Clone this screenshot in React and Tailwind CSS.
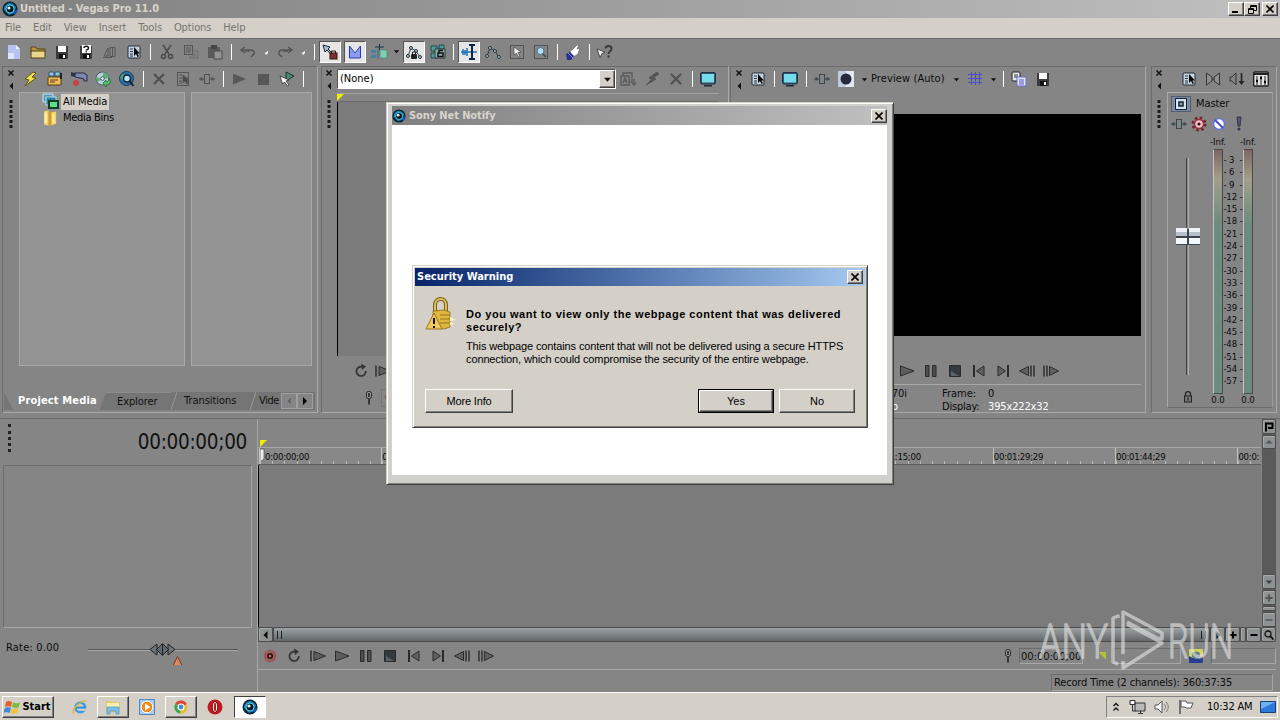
import clsx from 'clsx'

const UI = "font-['DejaVu_Sans_Condensed','DejaVu_Sans',sans-serif]"

const floppy = (
  <>
    <path d="M2 2h12v13H2z" fill="#3c3c3c" />
    <path d="M4 2h8v6H4z" fill="#fff" />
    <path d="M5 10h7v5H5z" fill="#111" />
    <path d="M9 11h2v3H9z" fill="#fff" />
  </>
)
const props = (
  <>
    <rect x="2" y="2" width="12" height="12" rx="1" fill="#c3d3df" stroke="#222c36" />
    <path d="M4 5h3M4 7.500h3M4 10h3M4 12h3" stroke="#26384c" />
    <path d="M8 3v9l2-2 1.500 3 1.500-.7-1.500-2.800H14z" fill="#080808" />
  </>
)
const monitor = (
  <>
    <rect x=".5" y="1.500" width="15" height="11.500" rx="1.500" fill="#36536b" stroke="#203347" />
    <path d="M2 3h12v8.500H2z" fill="#76dcec" />
    <path d="M4 14h8v1.500H4z" fill="#1d2b38" />
  </>
)
const insertFx = (
  <>
    <path d="M0 8h5M11 8h5" stroke="currentColor" />
    <rect x="5.500" y="3.500" width="5" height="9" fill="none" stroke="currentColor" />
    <path d="M2.500 6.500v3M13.500 6.500v3" stroke="currentColor" strokeWidth="2" />
  </>
)
const cross = <path d="M3 3l10 10M13 3L3 13" stroke="currentColor" strokeWidth="2.200" />
const envelope = (
  <>
    <path d="M2 12L5 4l5 3 4 6" fill="none" stroke="#2b3b43" />
    <g fill="#a9c5cc" stroke="#26343b">
      <circle cx="2" cy="12" r="1.500" />
      <circle cx="5" cy="4" r="1.500" />
      <circle cx="10" cy="7" r="1.500" />
      <circle cx="14" cy="13" r="1.500" />
    </g>
  </>
)

const ICONS = {
  app: (
    <>
      <circle cx="8" cy="8" r="7.500" fill="#08212f" />
      <path d="M2 9a6 6 0 0 1 9-6l3 3-2 6-5 2z" fill="#1587b5" />
      <circle cx="8" cy="8" r="4" fill="#06131d" stroke="#5cc9e8" />
      <circle cx="7" cy="7" r="1.600" fill="#d4f4ff" />
      <path d="M12 13l3-4" stroke="#1c58c8" strokeWidth="2" />
    </>
  ),
  file: (
    <>
      <path d="M2 1h8l4 4v10H2z" fill="#b7c2f0" />
      <path d="M10 1v4h4z" fill="#eef1ff" />
      <path d="M2 9h6v6H2z" fill="#dfe4ff" />
    </>
  ),
  open: (
    <>
      <path d="M1 3h5l1 2h8v3H1z" fill="#b89a3c" stroke="#544314" />
      <path d="M1 7h14v7H1z" fill="#ecd58c" stroke="#544314" />
    </>
  ),
  floppy,
  floppyAs: (
    <>
      {floppy}
      <path d="M4 1h9v8H4z" fill="#fff" />
      <path d="M6 4c0-2.500 4.500-2.500 4.500 0S8.200 5 8.200 6.500" fill="none" stroke="#111" strokeWidth="1.500" />
      <path d="M7.500 7.300H9v1.200H7.500z" fill="#111" />
    </>
  ),
  render: (
    <g fill="none" stroke="#555">
      <path d="M2 12l4-8v8zM8 3.500h5v9H8zM10.500 4v8M1 13.500h9" />
    </g>
  ),
  props,
  cut: (
    <g fill="none" stroke="#494949" strokeWidth="1.500">
      <path d="M4 1l6 9M12 1L6 10" />
      <circle cx="4.500" cy="12.500" r="2" />
      <circle cx="11.500" cy="12.500" r="2" />
    </g>
  ),
  copy: (
    <g fill="none" stroke="#555">
      <rect x="1.500" y="1.500" width="8" height="9" />
      <path d="M3 4h5M3 6h5M3 8h5" />
      <path d="M7 12v2h8V7h-4M9 10h4M9 12h4" stroke="#6b6b6b" />
    </g>
  ),
  paste: (
    <>
      <path d="M1 3h12v11H1z" fill="#5a5a5a" />
      <path d="M4 1h6v4H4z" fill="#454545" />
      <path d="M7 7h8v8H7z" fill="#949494" stroke="#4b4b4b" />
    </>
  ),
  undo: (
    <g fill="none" stroke="#545454" strokeWidth="1.500">
      <path d="M5 3L1 6l4 3M1 6h9c3 0 5 1 4 4l-3 3" />
      <path d="M5 7h5" />
    </g>
  ),
  redo: (
    <g fill="none" stroke="#545454" strokeWidth="1.500">
      <path d="M11 3l4 3-4 3M15 6H6c-3 0-5 1-4 4l3 3" />
      <path d="M11 7H6" />
    </g>
  ),
  editTool: (
    <>
      <path d="M1 1l7 2-2 2 4 4-1.500 1L5 6 3 8z" fill="#a9c0d8" stroke="#1b2433" />
      <rect x="8" y="9" width="7" height="6" fill="#7c2f2f" stroke="#30120f" />
      <path d="M9.500 9V7h4v2" fill="none" stroke="#30120f" />
    </>
  ),
  fade: <path d="M2.500 2l5.500 7 5.500-7v12h-11z" fill="#8b9cf4" stroke="#2b3ba8" />,
  ripple: (
    <>
      <path d="M4 3h9M8.500 0v6" stroke="#1d3442" />
      <path d="M9 6h7v8H9z" fill="#7fd0ae" stroke="#3f8067" strokeWidth=".6" />
      <path d="M0 6h5v3H0zM0 11h5v3H0z" fill="#4482a8" />
      <path d="M7 5v10" stroke="#2d6f9a" />
    </>
  ),
  envLock: (
    <>
      {envelope}
      <rect x="5" y="10" width="6" height="5" rx="1" fill="#222" />
      <path d="M6.500 10V8h3v2" fill="none" stroke="#222" />
    </>
  ),
  group: (
    <>
      <path d="M1 2h6v5H1zM1 9h6v5H1zM9 1h5v4H9z" fill="#4f9c9d" stroke="#27484a" />
      <path d="M5 5h10v9H5z" fill="#8fb0ac" stroke="#2a3c3c" />
      <path d="M8 9h5v3.500H8zM9 9V6.500h4" fill="none" stroke="#111" strokeWidth="1.500" />
    </>
  ),
  normal: (
    <>
      <path d="M0 8h16M2 5v6M4 6v5M6 4v8" stroke="#2270b8" strokeWidth="1.500" />
      <path d="M8 1h6M11 1v14M8 15h6" stroke="#0e2440" strokeWidth="2" />
    </>
  ),
  envelope,
  select: (
    <>
      <rect x="1.500" y="1.500" width="13" height="13" fill="none" stroke="#222" strokeDasharray="1 1" />
      <path d="M5 3l7 5-3 .5 2 4-1.500.7-2-4L5 11z" fill="#eee" stroke="#333" strokeWidth=".6" />
    </>
  ),
  zoomTool: (
    <>
      <rect x="1.500" y="1.500" width="13" height="13" fill="none" stroke="#222" strokeDasharray="1 1" />
      <circle cx="7.500" cy="7" r="3.500" fill="#b8dcf4" stroke="#47708f" />
      <path d="M10 10l3 3" stroke="#38566c" strokeWidth="2" />
    </>
  ),
  hand: (
    <>
      <path d="M5 7l2-1 5-5 2 0-2 4 3-1-1 3-1 3-3 2-3 1z" fill="#fff" stroke="#555" strokeWidth=".6" />
      <path d="M1 10l4-2 4 4-3 4H2z" fill="#2b2f8d" />
      <path d="M3 9l5 5" stroke="#7c87e5" />
    </>
  ),
  help: (
    <>
      <path d="M0 5l8 3-3 1.500-2 4z" fill="#ececec" stroke="#333" strokeWidth=".8" />
      <path d="M8.500 4.500c0-3.500 6-3.500 6 0S11.500 7 11.500 10" fill="none" stroke="#3a3a3a" strokeWidth="2" />
      <path d="M10.500 11.500h2v2h-2z" fill="#333" />
    </>
  ),
  bolt: <path d="M10 1L2 8l4 1-4 6 11-8-4-1 4-4z" fill="#f0e04c" stroke="#5b5313" />,
  mediaFx: (
    <>
      <path d="M2 1h5v4H2zM8 1h5v4H8z" fill="#8ec6e8" stroke="#385468" />
      <path d="M1 6h13v8H1z" fill="#e9c05a" stroke="#5b3d12" />
      <path d="M3 9h8M3 11h5" stroke="#7a2a1c" />
      <path d="M14 2v6" stroke="#222" strokeWidth="2" />
    </>
  ),
  capture: (
    <>
      <path d="M0 1l4 1v4L0 5z" fill="#2c3446" />
      <path d="M4 2h9l3 2v6h-3V8L4 6z" fill="#7d86ac" stroke="#222a40" />
      <circle cx="5" cy="12" r="3" fill="#c9424a" />
    </>
  ),
  disc: (
    <>
      <circle cx="7.500" cy="7.500" r="6.500" fill="#b9d0df" stroke="#4a6170" />
      <path d="M8 1a7 7 0 0 1 6 6l-6 1zM8 8l-6 3-1-5z" fill="#5fae74" />
      <circle cx="7.500" cy="7.500" r="1.800" fill="#e8f3fa" stroke="#456" />
      <path d="M8 12l3-3v2c2 0 3-2 3-4 3 5 0 7-3 7v2z" fill="#4fc462" stroke="#19612a" strokeWidth=".7" />
    </>
  ),
  webGet: (
    <>
      <circle cx="7.500" cy="7.500" r="7" fill="#2f6fa6" stroke="#153b5c" />
      <path d="M3 3l3 1 1 4-3 2-3-3z" fill="#47a36b" />
      <circle cx="8" cy="7.500" r="3.500" fill="#b8e3f6" stroke="#10202e" strokeWidth="1.500" />
      <path d="M10.500 10l4 5" stroke="#10202e" strokeWidth="2" />
    </>
  ),
  cross,
  propsDim: (
    <g fill="none" stroke="#555">
      <rect x="2.500" y="1.500" width="11" height="13" />
      <path d="M4 4h3M4 7h3M4 10h3M4 12h3" />
      <path d="M8 4v8l2-2 2 3 1-1-1-3h2z" fill="#4a4a4a" />
    </g>
  ),
  insertFx,
  playDim: <path d="M2 2.500L15 8 2 13.500z" fill="#575757" />,
  stopDim: <path d="M3 3h11v11H3z" fill="#575757" />,
  autoPreview: (
    <>
      <path d="M7 1l8 4-8 5z" fill="#4b8a79" stroke="#12352d" />
      <path d="M1 5l9 4-3 1 3 4-1.500 1-3-4-2 2z" fill="#f3f3f3" stroke="#222" strokeWidth=".7" />
    </>
  ),
  allMedia: (
    <>
      <path d="M0 0h10v8H0z" fill="#5b9fc0" stroke="#bfe6f2" />
      <path d="M3 3h10v8H3z" fill="#347e9c" stroke="#a9dced" />
      <path d="M5 6h11v9H5z" fill="#123f27" />
      <path d="M7 8h7v5H7z" fill="#5ddf8c" />
    </>
  ),
  bins: (
    <>
      <path d="M1 1l5-1v16l-5-1zM8 2l6-1v13l-6 2z" fill="#f5d56a" />
      <path d="M6 1h3v15H6z" fill="#cf9c2b" />
      <path d="M2 2h2v11H2zM10 4h2v9h-2z" fill="#fff0b0" />
    </>
  ),
  fxDim: (
    <g fill="none" stroke="#5a5a5a" strokeWidth="1.300">
      <path d="M1 5h8v9H1zM3 5V2h9v9h-3M3 12l2-5 2 5M4 10h2" />
      <path d="M14 8v6M12 12l2 2 2-2" />
    </g>
  ),
  boltDim: <path d="M13 1L5 7l3 1-6 6 10-6-3-1 6-4z" fill="#555" stroke="#555" />,
  monitor,
  split: (
    <>
      <path d="M0 0h16v16H0z" fill="#e3e7ef" />
      <path d="M0 0h8v16H0z" fill="#c0cbe4" />
      <circle cx="8" cy="8" r="5.500" fill="#27293c" />
    </>
  ),
  grid: <path d="M4.500 1v13M8.500 1v13M12.500 1v13M1 3.500h14M1 7.500h14M1 11.500h14" stroke="#4c51bd" />,
  copyPic: (
    <>
      <rect x="1" y="1" width="8" height="9" rx="1" fill="#e3e9ec" stroke="#222" />
      <path d="M3 4h4M3 6h4" stroke="#333" />
      <path d="M6 6h9v9H6z" fill="#dfe2ff" stroke="#6a6fd0" />
      <path d="M8 9h5M8 11h5M8 13h5" stroke="#5559c0" />
    </>
  ),
  downmix: <path d="M1.500 2L7 6v4l-5.500 4zM14.500 2L9 6v4l5.500 4zM7 8h2" fill="#8f8f8f" stroke="#333" />,
  dim: (
    <>
      <path d="M1 6h2l4-4v12L3 10H1z" fill="#858585" stroke="#333" />
      <path d="M12.500 2v10" stroke="#222" strokeWidth="1.600" />
      <path d="M9.500 10h6l-3 4z" fill="#222" />
    </>
  ),
  mixer: (
    <>
      <rect x=".7" y="1" width="14.600" height="14" rx="1" fill="#e4e4e4" stroke="#222" strokeWidth="1.400" />
      <path d="M1 3h14" stroke="#222" strokeWidth="2" />
      <path d="M4 5v9M8 5v9M12 5v9" stroke="#222" />
      <path d="M3 10h2M7 7h2M11 11h2" stroke="#000" strokeWidth="2.500" />
    </>
  ),
  gear: (
    <>
      <circle cx="8" cy="8" r="6" fill="none" stroke="#6e2430" strokeWidth="3" strokeDasharray="2.400 2.300" />
      <circle cx="8" cy="8" r="4.500" fill="#f0c4cb" stroke="#9d2e40" strokeWidth="1.500" />
      <circle cx="8" cy="8" r="1.600" fill="#3c0d14" />
    </>
  ),
  mute: (
    <>
      <circle cx="8" cy="8" r="5.500" fill="#fff" stroke="#6b6fe6" strokeWidth="1.500" />
      <path d="M4 4l8 8" stroke="#4a4fc8" strokeWidth="2" />
    </>
  ),
  solo: (
    <>
      <path d="M6 1h4L9 10H7z" fill="#55577a" stroke="#26283c" strokeWidth=".8" />
      <circle cx="8" cy="13" r="1.600" fill="#34364e" />
    </>
  ),
  padlock: (
    <>
      <path d="M5.500 7V5c0-3.300 5-3.300 5 0v2" fill="none" stroke="#222" strokeWidth="1.300" />
      <rect x="4.500" y="7" width="7" height="6" fill="#777" stroke="#222" />
      <path d="M8 8.500v3" stroke="#111" />
    </>
  ),
  record: (
    <>
      <circle cx="8" cy="8" r="5.500" fill="#946868" stroke="#a35252" strokeWidth="1.600" />
      <circle cx="8" cy="8" r="2.200" fill="#a58080" stroke="#3d0b0b" strokeWidth="1.700" />
    </>
  ),
  loop: (
    <>
      <path d="M9 3.700A4.700 4.700 0 1 0 12.800 8" fill="none" stroke="#333" strokeWidth="1.700" />
      <path d="M8 .5l5 3-4 3.500z" fill="#333" />
    </>
  ),
  playStart: (
    <>
      <path d="M1 2.500v11" stroke="#333" strokeWidth="1.600" />
      <path d="M4 3.500L15.500 8 4 12.500z" fill="#5e5e5e" stroke="#2b2b2b" />
    </>
  ),
  play: <path d="M1.500 3L15 8 1.500 13z" fill="#5e5e5e" stroke="#2b2b2b" />,
  pause: <path d="M2.500 2.500h3.500v11H2.500zM9.500 2.500H13v11H9.500z" fill="#4e4e4e" stroke="#2b2b2b" />,
  stop: (
    <>
      <path d="M2.500 2.500h11v11h-11z" fill="#34393d" stroke="#2b2b2b" />
      <path d="M4 8l8 5H4z" fill="#59636a" />
    </>
  ),
  toStart: (
    <>
      <path d="M3 2v12" stroke="#2b2b2b" strokeWidth="2" />
      <path d="M13 3v10L5.500 8z" fill="#606060" stroke="#2b2b2b" />
    </>
  ),
  toEnd: (
    <>
      <path d="M13 2v12" stroke="#2b2b2b" strokeWidth="2" />
      <path d="M3 3v10L10.500 8z" fill="#606060" stroke="#2b2b2b" />
    </>
  ),
  prevFrame: (
    <>
      <path d="M9.500 3.500v9L.5 8z" fill="#606060" stroke="#2b2b2b" />
      <path d="M12 2.500v11M15 2.500v11" stroke="#2b2b2b" strokeWidth="1.400" />
    </>
  ),
  nextFrame: (
    <>
      <path d="M6.500 3.500v9l9-4.500z" fill="#606060" stroke="#2b2b2b" />
      <path d="M1 2.500v11M4 2.500v11" stroke="#2b2b2b" strokeWidth="1.400" />
    </>
  ),
  pin: (
    <>
      <rect x="5.500" y="1.500" width="5" height="7" rx="2" fill="#9a9a9a" stroke="#222" />
      <path d="M8 3v4M8 9v5.500" stroke="#222" strokeWidth="1.600" />
    </>
  ),
  ie: (
    <>
      <circle cx="8.300" cy="8.500" r="4.800" fill="none" stroke="#3c9be4" strokeWidth="2.600" />
      <path d="M4 8.600h9" stroke="#2f8fd9" strokeWidth="2" />
      <path d="M10 11l5-.5" stroke="#d4d0c8" strokeWidth="2" />
      <path d="M1.500 14.500C-1 11 9 1 14.500 2" fill="none" stroke="#e8b526" strokeWidth="1.400" />
    </>
  ),
  explorer: (
    <>
      <path d="M1 2h5l1 1h8v10H1z" fill="#e6c964" />
      <path d="M2 4h12v5H2z" fill="#fbf0b4" />
      <path d="M2 8h12v7h-3v-3H5v3H2z" fill="#7cbfe6" stroke="#4c93c4" strokeWidth=".7" />
    </>
  ),
  wmp: (
    <>
      <path d="M.5.500h15v15H.5z" fill="#a9cdf0" stroke="#4a86c0" />
      <circle cx="8" cy="8" r="5.800" fill="#f08a1d" stroke="#fff" />
      <path d="M6 4.500L11.500 8 6 11.500z" fill="#fff" />
    </>
  ),
  chrome: (
    <>
      <circle cx="8" cy="8" r="7.500" fill="#e8bd2c" />
      <path d="M8 8L1.500 4.200A7.500 7.500 0 0 1 14.600 4.500z" fill="#d9453b" />
      <path d="M8 8L1.500 4.200A7.500 7.500 0 0 0 7 15.500z" fill="#3ea455" />
      <circle cx="8" cy="8" r="3.400" fill="#4a86dd" stroke="#fff" strokeWidth="1.300" />
    </>
  ),
  opera: (
    <>
      <circle cx="8" cy="8" r="7.500" fill="#c01a1f" />
      <ellipse cx="8" cy="8" rx="2.800" ry="5.500" fill="#f6e9e6" stroke="#7c0a0d" />
      <ellipse cx="8" cy="8" rx="1" ry="4.500" fill="#b51216" />
    </>
  ),
  network: (
    <>
      <path d="M5 4h10v8H5z" fill="#b9b9b9" stroke="#333" />
      <path d="M8 14.500h5M10.500 12v3M0 1.500h5v4H0zM2.500 5v7h3" fill="none" stroke="#333" />
      <path d="M1 2h3v3H1z" fill="#fff" />
    </>
  ),
  speaker: (
    <>
      <path d="M1 6h3l4-4v12l-4-4H1z" fill="#f6f6f6" stroke="#555" />
      <path d="M10 5c2 2 2 4 0 6M12 3c3 3 3 7 0 10" fill="none" stroke="#777" />
    </>
  ),
  flag: (
    <>
      <path d="M2 1v14" stroke="#555" strokeWidth="1.500" />
      <path d="M3 2h5l1 2h6l-2 5H8L7 8H3z" fill="#fff" stroke="#555" />
    </>
  ),
  desktop: (
    <>
      <path d="M.5 2.500h15v11H.5z" fill="#2f79d8" stroke="#1c3d78" />
      <path d="M1 3h14L1 10z" fill="#6fb0f4" />
    </>
  ),
  windows: (
    <>
      <path d="M1 3c2-1.500 4-1 6 0L6 8C4 7 2 7 0 8z" fill="#e4602c" />
      <path d="M8 3.500c2 1 4 1 7 0l-1.500 5c-2.500 1-4.500.5-6.500-.5z" fill="#7fba3c" />
      <path d="M0 9c2-1 4-1 6 0l-1.500 5C3 13-.500 13-1.500 14z" fill="#3d86d8" />
      <path d="M7 9.500c2 1 4 1 6.500 0L12 14c-2 1-4 1-6.500 0z" fill="#f4c22c" />
    </>
  ),
}

function Icon({ name, className = 'size-4' }) {
  return (
    <svg viewBox="0 0 16 16" className={clsx('shrink-0 overflow-visible', className)}>
      {ICONS[name]}
    </svg>
  )
}

function Slot({ name, on, dim, className = 'w-6' }) {
  return (
    <div className={clsx('flex h-6 shrink-0 items-center justify-center', className, dim ? 'text-[#505050]' : 'text-[#39464e]')}>
      {on ? (
        <div className="flex size-[22px] items-center justify-center border border-t-[#555] border-l-[#555] border-r-white border-b-white bg-[#e6e6e6]">
          <Icon name={name} />
        </div>
      ) : (
        <Icon name={name} />
      )}
    </div>
  )
}

function Sep({ className = 'w-2' }) {
  return (
    <div className={clsx('flex shrink-0 justify-center', className)}>
      <div className="h-4 w-px bg-white" />
    </div>
  )
}

function Caret({ className = 'w-[13px]', size = 'size-[7px]' }) {
  return (
    <div className={clsx('flex shrink-0 justify-center', className)}>
      <svg viewBox="0 0 8 8" className={size}>
        <path d="M1 2.500h6L4 6z" fill="#111" />
      </svg>
    </div>
  )
}

// little undo/redo history arrows
function Fleck() {
  return (
    <div className="flex w-[13px] shrink-0 justify-center pt-[3px]">
      <svg viewBox="0 0 4 4" className="size-1">
        <path d="M0 2L3 0v2L1 4z" fill="#fff" />
      </svg>
    </div>
  )
}

function Grip({ dots = true }) {
  return (
    <div className="flex w-2 shrink-0 flex-col items-center">
      <svg viewBox="0 0 8 60" className="h-[60px] w-2">
        <path d="M1.500 1.500l5 5M6.500 1.500l-5 5" stroke="#111" strokeWidth="1.500" />
        <path d="M6 13.500v7L2.500 17z" fill="#111" />
        {dots && <path d="M4 31v28" stroke="#1c1c1c" strokeWidth="3" strokeDasharray="3 2" />}
      </svg>
    </div>
  )
}

function WinButton({ children, className }) {
  return (
    <div
      className={clsx(
        'flex shrink-0 items-center justify-center border border-t-white border-l-white border-r-[#404040] border-b-[#404040] bg-[#d4d0c8] text-black shadow-[inset_-1px_-1px_0_#808080]',
        className
      )}
    >
      {children}
    </div>
  )
}

function CloseGlyph() {
  return (
    <svg viewBox="0 0 8 8" className="size-2">
      <path d="M.5.500l7 7M7.500.500l-7 7" stroke="#000" strokeWidth="1.600" />
    </svg>
  )
}

function TitleBar() {
  return (
    <div className="flex h-[18px] shrink-0 items-center bg-linear-to-r from-[#808080] to-[#c0c0c0] pr-[2px] pl-[2px]">
      <Icon name="app" />
      <span className="ml-[2px] flex-1 pt-px text-[11px] font-bold tracking-[-0.030px] text-[#d8d4cc]">Untitled - Vegas Pro 11.0</span>
      <WinButton className="h-[14px] w-4">
        <svg viewBox="0 0 8 8" className="size-2"><path d="M0 7h6" stroke="#000" strokeWidth="2" /></svg>
      </WinButton>
      <WinButton className="h-[14px] w-4">
        <svg viewBox="0 0 9 9" className="size-[9px]">
          <path d="M2.500 3V.500h6v5H6M2 1.500h7M.5 3.500h5v5h-5zM0 4.500h6" fill="none" stroke="#000" />
        </svg>
      </WinButton>
      <WinButton className="ml-[2px] h-[14px] w-4"><CloseGlyph /></WinButton>
    </div>
  )
}

function MenuBar() {
  return (
    <div className="flex h-5 shrink-0 items-center gap-[12px] bg-[#d4d0c8] pt-px pl-[5px] text-[11px] tracking-[-0.120px] text-[#77746e]">
      {['File', 'Edit', 'View', 'Insert', 'Tools', 'Options', 'Help'].map((m) => (
        <span key={m}>{m}</span>
      ))}
    </div>
  )
}

function MainToolbar() {
  return (
    <div className="flex h-[28px] shrink-0 items-center border-t border-[#6c6c6c] pb-[2px] pl-[2px]">
      <Slot name="file" />
      <Slot name="open" />
      <Slot name="floppy" />
      <Slot name="floppyAs" />
      <Slot name="render" />
      <Slot name="props" />
      <Sep className="w-[9px]" />
      <Slot name="cut" />
      <Slot name="copy" />
      <Slot name="paste" />
      <Sep className="w-[9px]" />
      <Slot name="undo" />
      <Fleck />
      <Slot name="redo" />
      <Fleck />
      <Sep />
      <Slot name="editTool" on />
      <Slot name="fade" on className="w-[25px]" />
      <Slot name="ripple" className="w-[23px]" />
      <Caret className="w-[12px]" />
      <Slot name="envLock" on />
      <Slot name="group" className="w-[23px]" />
      <Sep />
      <Slot name="normal" on />
      <Slot name="envelope" />
      <Slot name="select" />
      <Slot name="zoomTool" />
      <Sep />
      <Slot name="hand" />
      <Sep />
      <Slot name="help" />
    </div>
  )
}

const PANEL = 'flex shrink-0 border border-t-[#6c6c6c] border-l-[#6c6c6c] border-r-[#a8a8a8] border-b-[#a8a8a8] pt-[2px]'
const SUNKEN = 'border border-t-[#6c6c6c] border-l-[#6c6c6c] border-r-[#a8a8a8] border-b-[#a8a8a8]'

function MediaPanel() {
  return (
    <div className={clsx(PANEL, 'w-[316px] pl-1')}>
      <Grip />
      <div className="flex w-[300px] flex-col">
        <div className="mb-[3px] flex h-[20px] items-center pl-1">
          <Slot name="bolt" />
          <Slot name="mediaFx" />
          <Slot name="capture" />
          <Slot name="disc" />
          <Slot name="webGet" />
          <Sep />
          <Slot name="cross" dim />
          <Slot name="propsDim" />
          <Slot name="insertFx" dim />
          <Sep />
          <Slot name="playDim" />
          <Slot name="stopDim" />
          <Slot name="autoPreview" />
          <Sep />
        </div>
        <div className="flex gap-[6px] pl-1">
          <div className="h-[274px] w-[166px] border border-[#a9a9a9] bg-[#939393] pt-px pl-[23px] text-[11px] leading-4 text-black">
            <div className="flex items-center">
              <Icon name="allMedia" />
              <span className="ml-[2px] bg-[#d4d0c8] px-[2px] tracking-[-0.100px]">All Media</span>
            </div>
            <div className="flex items-center">
              <Icon name="bins" className="h-4 w-[15px]" />
              <span className="ml-[5px] tracking-[-0.300px]">Media Bins</span>
            </div>
          </div>
          <div className="h-[274px] w-[121px] border border-[#a9a9a9] bg-[#939393]" />
        </div>
        <div className="-ml-[11px] mt-[26px] flex h-[18px] items-center bg-[#757575] text-[11px] text-[#101010]">
          <div className="flex h-full w-[102px] items-center bg-[#858585] pl-[14px] font-bold tracking-[0.150px] text-white [clip-path:polygon(0_0,100%_0,94%_100%,9%_100%)]">
            Project Media
          </div>
          <div className="w-[65px] border-t border-[#8c8c8c] pl-[11px] leading-[17px] tracking-[-0.100px]">Explorer</div>
          <svg viewBox="0 0 6 18" className="h-[18px] w-[6px] shrink-0"><path d="M0 18L6 0" stroke="#999" /></svg>
          <div className="w-[73px] pl-[7px] tracking-[-0.050px]">Transitions</div>
          <svg viewBox="0 0 6 18" className="h-[18px] w-[6px] shrink-0"><path d="M0 18L6 0" stroke="#999" /></svg>
          <div className="w-[25px] pl-[3px] tracking-[-0.400px]">Vide</div>
          <div className="flex h-4 w-4 items-center justify-center border border-[#a0a0a0] bg-[#858585]">
            <svg viewBox="0 0 4 6" className="h-[6px] w-1"><path d="M3.500 0v6L.5 3z" fill="#5c5c5c" /></svg>
          </div>
          <div className="flex h-4 w-4 items-center justify-center border border-[#a0a0a0] bg-[#858585]">
            <svg viewBox="0 0 4 8" className="h-2 w-1"><path d="M0 0v8l4-4z" fill="#000" /></svg>
          </div>
        </div>
      </div>
    </div>
  )
}

function TrimmerPanel() {
  return (
    <div className={clsx(PANEL, 'ml-[3px] w-[408px] pl-[3px]')}>
      <Grip />
      <div className="flex w-[385px] flex-col pl-1">
        <div className="flex h-[20px] items-center">
          <div className="flex h-[20px] w-[279px] shrink-0 items-center justify-between border border-t-[#555] border-l-[#555] border-r-white border-b-white bg-white pl-[2px] text-[11px] text-black">
            (None)
            <WinButton className="h-[18px] w-4"><Caret size="size-[9px]" /></WinButton>
          </div>
          <Slot name="fxDim" />
          <Slot name="boltDim" />
          <Slot name="cross" dim />
          <Sep />
          <Slot name="monitor" />
        </div>
        <div className="mt-[4px] h-[9px] w-[382px] border-t border-b border-t-[#a2a2a2] border-b-[#6c6c6c]">
          <div className="size-[7px] bg-[#f2ee00] [clip-path:polygon(0_0,100%_0,0_100%)]" />
        </div>
        <div className="h-[254px] w-[382px] border-l border-black bg-[#7b7b7b]" />
        <div className="mt-[3px] flex pl-[12px]">
          <Slot name="loop" />
          <Slot name="playStart" className="w-5" />
        </div>
        <div className="mt-[3px] flex items-center pl-[20px]">
          <Slot name="pin" />
          <span className="border border-[#777] px-[3px] text-[11px] text-[#111]">00:00:00;00</span>
        </div>
      </div>
    </div>
  )
}

const TRANSPORT = ['play', 'pause', 'stop', 'toStart', 'toEnd', 'prevFrame', 'nextFrame']

function PreviewPanel() {
  return (
    <div className={clsx(PANEL, 'ml-[1px] w-[416px] pl-1')}>
      <Grip dots={false} />
      <div className="flex w-[398px] flex-col">
        <div className="mb-[2px] flex h-[20px] items-center pl-[3px] text-[11px] text-[#0c0c0c]">
          <Slot name="props" />
          <Sep />
          <Slot name="monitor" />
          <Sep />
          <Slot name="insertFx" />
          <Slot name="split" />
          <Caret />
          <span className="w-[78px] whitespace-nowrap tracking-[0.100px]">Preview (Auto)</span>
          <Caret className="w-[14px]" />
          <Slot name="grid" />
          <Caret className="w-[12px]" />
          <Sep />
          <Slot name="copyPic" />
          <Slot name="floppy" />
        </div>
        <div className="mt-[23px] ml-[3px] h-[222px] bg-black" />
        <div className="mt-[23px] flex pl-[152px]">
          {TRANSPORT.map((n) => (
            <Slot key={n} name={n} />
          ))}
        </div>
        <div className="mt-[1px] ml-[3px] flex h-[27px] border-t border-[#a8a8a8] pt-[2px] text-[11px] leading-[13px] text-[#0c0c0c]">
          <div className="w-[196px] text-right">
            <div className="w-[161px]">1440x810x32; 29,970i</div>
            <div className="w-[152px] text-white">360x203x32; 29,970p</div>
          </div>
          <div className="w-[46px]">
            <div>Frame:</div>
            <div className="tracking-[-0.200px]">Display:</div>
          </div>
          <div>
            <div>0</div>
            <div className="tracking-[-0.150px] text-white">395x222x32</div>
          </div>
        </div>
      </div>
    </div>
  )
}

const DB = [3, 6, 9, 12, 15, 18, 21, 24, 27, 30, 33, 36, 39, 42, 45, 48, 51, 54, 57]

function Meter() {
  return (
    <div className="flex w-[18px] shrink-0 flex-col items-center pt-px text-[9.500px] leading-[12px] text-[#0c0c0c]">
      <span className="whitespace-nowrap">-Inf.</span>
      <div className="mt-[1px] h-[245px] w-[10px] border border-t-[#4a4a4a] border-l-[#c4c4c4] border-r-[#4a4a4a] border-b-[#4a4a4a] bg-linear-to-b from-[#7d6764] via-[#a19f88] via-12% to-[#6d8c7f] to-30%" />
      <span className="whitespace-nowrap">0.0</span>
    </div>
  )
}

function MixerPanel() {
  return (
    <div className={clsx(PANEL, 'ml-[5px] w-[126px] pl-[3px]')}>
      <Grip />
      <div className="flex w-[112px] flex-col pl-[4px]">
        <div className="mb-[2px] flex h-[20px] items-center pl-[10px]">
          <Slot name="props" />
          <Slot name="downmix" />
          <Slot name="dim" />
          <Slot name="mixer" />
        </div>
        <div className="mt-[1px] flex h-[316px] w-[106px] flex-col border border-t-[#b4b4b4] border-l-[#a8a8a8] border-r-[#9a9a9a] border-b-[#6c6c6c] pl-[3px]">
          <div className="mt-[3px] flex h-4 items-center text-[11px] text-[#0c0c0c]">
            <div className="flex h-4 w-[20px] items-center justify-center border border-[#4d5c6e] bg-[#7b8ca2]">
              <svg viewBox="0 0 12 12" className="size-3">
                <path d="M.5.500h11v11H.5z" fill="#d5e2ef" stroke="#16202c" />
                <path d="M4 4h4v4H4z" fill="#8fa4bb" stroke="#16202c" strokeWidth="1.500" />
              </svg>
            </div>
            <span className="ml-[5px] pt-px tracking-[-0.100px]">Master</span>
          </div>
          <div className="flex h-[23px] items-center pt-px">
            <Slot name="insertFx" className="w-4" />
            <Slot name="gear" className="w-[24px]" />
            <Slot name="mute" className="w-4" />
            <Slot name="solo" className="w-[24px]" />
          </div>
          <div className="flex">
            <div className="flex w-[38px] flex-col items-center pt-[23px] pr-[5px]">
              <div className="relative h-[217px] w-[3px] border-r border-l border-r-[#b0b0b0] border-l-[#444]">
                <svg viewBox="0 0 24 18" className="absolute top-[70px] -left-[11px] h-[18px] w-6">
                  <path d="M0 1h24v16H0z" fill="#3d4650" />
                  <path d="M0 0h11v4H0zM13 0h11v4H13z" fill="#eef2f6" />
                  <path d="M0 4h11v4H0zM13 4h11v4H13z" fill="#b6c1cb" />
                  <path d="M0 10h11v6H0zM13 10h11v6H13z" fill="#f5f8fb" />
                </svg>
              </div>
              <Icon name="padlock" className="mt-[14px] size-4" />
            </div>
            <Meter />
            <div className="flex w-[12px] flex-col items-center pt-[19px] text-[9.500px] leading-[12.300px] tracking-[-0.100px] text-[#0c0c0c]">
              {DB.map((d) => (
                <span key={d} className="whitespace-pre">{d < 10 ? `- ${d}  -` : `-${d} -`}</span>
              ))}
            </div>
            <Meter />
          </div>
        </div>
      </div>
    </div>
  )
}

function TrackHeader() {
  return (
    <div className="flex w-[257px] shrink-0 flex-col">
      <div className="flex h-[46px] items-center justify-between pr-[10px] pl-[8px]">
        <div className="mb-[8px] h-[28px] border-l-3 border-dotted border-[#222]" />
        <span className="text-[20.500px] tracking-[-0.300px] text-[#111]">00:00:00;00</span>
      </div>
      <div className={clsx(SUNKEN, 'ml-[3px] h-[163px] w-[249px]')} />
      <div className="flex h-[44px] items-center pl-[6px] text-[11px] text-[#0c0c0c]">
        <span className="mb-[4px] w-[82px] tracking-[0.200px]">Rate: 0.00</span>
        <svg viewBox="0 0 150 30" className="h-[30px] w-[150px]">
          <path d="M0 14.500h150" stroke="#555" />
          <path d="M0 15.500h150" stroke="#a6a6a6" />
          <path d="M69 9v11l-7-5.500zM80 9v11l7-5.500z" fill="#6f7478" stroke="#222" />
          <path d="M74.500 8.500l6 6-6 6-6-6z" fill="#626a70" stroke="#222" />
          <path d="M74.500 9v11" stroke="#222" />
          <path d="M89.500 21.500l5 10h-10z" fill="#d88a5e" stroke="#7b3617" />
        </svg>
      </div>
    </div>
  )
}

const MARKS = ['0:00:00;00', '00:00:15;00', '00:00:29;29', '00:00:45;00', '00:00:59;28', '00:01:15;00', '00:01:29;29', '00:01:44;29', '00:0:']
const BEVEL = 'flex shrink-0 items-center justify-center rounded-[2px] border border-[#4c4c4c] bg-[#8f9292] shadow-[inset_1px_1px_0_#aaa]'

// scroll bar buttons: arrows, plus and minus
const GLYPHS = {
  up: <path d="M1.500 6.500h7L5 3z" fill="#555" />,
  down: <path d="M1.500 3.500h7L5 7z" fill="#444" />,
  left: <path d="M6.500 1v8l-4-4z" fill="#000" />,
  right: <path d="M3.500 1v8l4-4z" fill="#000" />,
  plus: <path d="M5 1.500v7M1.500 5h7" stroke="currentColor" strokeWidth="2" />,
  minus: <path d="M1.500 5h7" stroke="currentColor" strokeWidth="2" />,
  flag: <path d="M2 9.500V1.500h6.500v4.500H4" fill="none" stroke="#000" strokeWidth="2" />,
  zoom: (
    <>
      <circle cx="4" cy="4" r="3" fill="none" stroke="#111" strokeWidth="1.300" />
      <path d="M6 6l3.500 3.500" stroke="#111" strokeWidth="1.800" />
    </>
  ),
}

function BarButton({ glyph, className }) {
  return (
    <div className={clsx(BEVEL, className)}>
      {glyph && (
        <svg viewBox="0 0 10 10" className="size-[10px]">
          {GLYPHS[glyph]}
        </svg>
      )}
    </div>
  )
}

function Timeline() {
  return (
    <div className="flex w-[1019px] shrink-0 flex-col border-l border-l-[#a8a8a8]">
      <div className="flex h-[208px]">
        <div className="flex w-[1003px] flex-col">
          <div className="flex h-[29px] items-end border-b border-[#a8a8a8] pl-[2px]">
            <div className="size-[7px] bg-[#f2ee00] [clip-path:polygon(0_0,100%_0,0_100%)]" />
          </div>
          <div className="flex h-[17px] overflow-hidden border-b border-[#5e5e5e] bg-[#888] pl-px">
            {MARKS.map((m, i) => (
              <div key={m} className="flex w-[122.300px] shrink-0 flex-col border-l border-[#c4c4c4] text-[9.500px] leading-[17px] whitespace-nowrap text-[#080808]">
                <div className="flex h-[13px]">
                  {i === 0 && (
                    <svg viewBox="0 0 5 14" className="h-[14px] w-[5px]">
                      <path d="M0 1h4v10L0 14z" fill="#e9eef2" stroke="#444" strokeWidth=".7" />
                    </svg>
                  )}
                  <span className="tracking-[-0.250px]">{m}</span>
                </div>
                <div className="h-[3px] bg-[repeating-linear-gradient(to_right,#bbb_0_1px,transparent_1px_12.230px)]" />
              </div>
            ))}
          </div>
          <div className="flex-1 border-l border-black bg-[#7b7b7b]" />
        </div>
        <div className="ml-[1px] flex w-[14px] flex-col gap-px bg-[#5a5a5a]">
          <BarButton glyph="flag" className="h-[15px]" />
          <BarButton glyph="up" className="h-[14px]" />
          <div className="flex-1" />
          <BarButton glyph="down" className="h-[15px]" />
          <BarButton glyph="plus" className="h-[15px] text-[#555]" />
          <BarButton className="h-[5px]" />
          <BarButton glyph="minus" className="h-[15px] text-[#666]" />
        </div>
      </div>
      <div className="flex h-[15px] bg-[#5a5a5a]">
        <BarButton glyph="left" className="w-[15px]" />
        <div className="flex flex-1 items-center justify-between rounded-[2px] border border-[#4c4c4c] bg-linear-to-b from-[#9da1a2] to-[#63696b] px-[3px]">
          <div className="h-2 w-[5px] border-x border-[#222]" />
          <div className="h-2 w-[5px] border-x border-[#222]" />
        </div>
        <BarButton glyph="right" className="w-[15px]" />
        <BarButton glyph="plus" className="w-[15px]" />
        <BarButton className="w-[6px]" />
        <BarButton glyph="minus" className="w-[15px]" />
        <BarButton glyph="zoom" className="w-[15px]" />
      </div>
      <div className="flex h-[28px] items-center border-b border-[#a8a8a8] pt-px text-[11px] text-[#0c0c0c]">
        {['record', 'loop', 'playStart', ...TRANSPORT].map((n) => (
          <Slot key={n} name={n} />
        ))}
        <Slot name="pin" className="ml-[499px] w-[22px]" />
        <div className={clsx(SUNKEN, 'h-4 w-[65px] pl-px leading-[15px] whitespace-nowrap')}>00:00:00;00</div>
        <div className="ml-[15px] size-[8px] bg-[#b5c234] [clip-path:polygon(0_0,100%_0,100%_100%)]" />
        <div className={clsx(SUNKEN, 'ml-[6px] h-4 w-[69px]')} />
        <svg viewBox="0 0 14 14" className="mx-[8px] size-[14px]">
          <path d="M0 0h14v14H0z" fill="#d2d85a" />
          <path d="M0 7q7 5 14 0v7H0z" fill="#27408c" />
          <path d="M3 4q4-3 8 0v4q-4 3-8 0z" fill="#5b7f8c" />
        </svg>
        <div className={clsx(SUNKEN, 'h-4 w-[66px]')} />
      </div>
      <div className="flex flex-1 items-center justify-end pr-[3px] text-[11px] text-[#0c0c0c]">
        <div className={clsx(SUNKEN, 'mt-[3px] h-[17px] w-[222px] pl-[2px] leading-[15px] tracking-[-0.150px]')}>
          Record Time (2 channels): 360:37:35
        </div>
      </div>
    </div>
  )
}

function TaskBar() {
  return (
    <div className="flex h-[28px] shrink-0 items-center border-t border-white bg-[#d4d0c8] pr-[2px] pl-[2px] text-[11px] text-black">
      <WinButton className="h-[22px] w-[52px] gap-px">
        <Icon name="windows" />
        <span className="pt-[2px] font-bold">Start</span>
      </WinButton>
      <Icon name="ie" className="ml-[18px] size-4" />
      <WinButton className="ml-[9px] h-[22px] w-8"><Icon name="explorer" /></WinButton>
      <Icon name="wmp" className="ml-[10px] size-4" />
      <WinButton className="ml-[10px] h-[22px] w-8"><Icon name="chrome" className="size-[14px]" /></WinButton>
      <Icon name="opera" className="ml-[10px] size-4" />
      <div className="ml-[11px] flex h-[22px] w-8 items-center justify-center border border-t-[#404040] border-l-[#404040] border-r-white border-b-white bg-white">
        <Icon name="app" />
      </div>
      <div className="ml-auto flex h-[22px] w-[172px] items-center border border-t-[#808080] border-l-[#808080] border-r-white border-b-white pr-[1px] pl-[6px]">
        <svg viewBox="0 0 6 10" className="h-[10px] w-[6px]">
          <path d="M.5 4L3 1.500 5.500 4M.5 8.500L3 6l2.500 2.500" fill="none" stroke="#111" strokeWidth="1.300" />
        </svg>
        <Icon name="network" className="ml-[11px] size-4" />
        <Icon name="speaker" className="ml-[8px] size-4" />
        <Icon name="flag" className="ml-[8px] size-4" />
        <span className="ml-[13px] w-[48px] pt-[2px] whitespace-nowrap tracking-[-0.200px]">10:32 AM</span>
        <Icon name="desktop" className="ml-auto size-4" />
      </div>
    </div>
  )
}

function LockWarning() {
  return (
    <svg viewBox="0 0 32 34" className="h-[34px] w-8 shrink-0">
      <path d="M10 15V8c0-8 11-8 11 0v7" fill="none" stroke="#7f6014" strokeWidth="4" />
      <path d="M10 15V8c0-8 11-8 11 0v7" fill="none" stroke="#d9bf62" strokeWidth="2" />
      <path d="M8 14l11-1 6 2v15l-6 2-11-2z" fill="#dfb63e" stroke="#8a6a1c" strokeWidth=".8" />
      <path d="M15 18h10M15 22h10M15 26h10" stroke="#967220" strokeWidth="1.200" />
      <path d="M25 20l6 3-6 1zM25 25l5 2-5 1z" fill="#fff6c8" />
      <path d="M9 16L1 32h16z" fill="#f0ca56" stroke="#9a7420" />
      <path d="M9 21v6" stroke="#111" strokeWidth="2" />
      <path d="M8 29h2v2H8z" fill="#111" />
    </svg>
  )
}

function SecurityDialog() {
  return (
    <div className="absolute top-[265px] left-[412px] flex h-[163px] w-[456px] flex-col border border-t-[#d4d0c8] border-l-[#d4d0c8] border-r-[#404040] border-b-[#404040] bg-[#d4d0c8] p-[2px] font-['Liberation_Sans',Arial,sans-serif] text-[11px] text-black shadow-[inset_1px_1px_0_#fff,inset_-1px_-1px_0_#808080]">
      <div className={clsx('flex h-[18px] shrink-0 items-center justify-between bg-linear-to-r from-[#0a246a] to-[#a6caf0] pr-[2px] pl-[2px] font-bold text-white', UI)}>
        <span className="pt-px">Security Warning</span>
        <WinButton className="h-[14px] w-4"><CloseGlyph /></WinButton>
      </div>
      <div className="flex px-[10px] pt-[11px]">
        <LockWarning />
        <div className="ml-[9px] w-[400px] pt-[11px] leading-[13px]">
          <p className="font-bold tracking-[0.520px] whitespace-nowrap">Do you want to view only the webpage content that was delivered<br />securely?</p>
          <p className="mt-[6px] tracking-[-0.120px] whitespace-nowrap">This webpage contains content that will not be delivered using a secure HTTPS<br />connection, which could compromise the security of the entire webpage.</p>
        </div>
      </div>
      <div className="mt-auto mb-[12px] flex items-center px-[10px]">
        <WinButton className="h-[24px] w-[88px] tracking-[-0.150px]">More Info</WinButton>
        <div className="ml-auto border border-black">
          <WinButton className="h-[22px] w-[74px]">Yes</WinButton>
        </div>
        <WinButton className="ml-[5px] h-[24px] w-[76px]">No</WinButton>
      </div>
    </div>
  )
}

function NotifyWindow() {
  return (
    <div className="absolute top-[102px] left-[386px] flex h-[383px] w-[508px] flex-col border border-t-[#d4d0c8] border-l-[#d4d0c8] border-r-[#404040] border-b-[#404040] bg-[#d0d0cd] pt-[3px] pr-[6px] pb-[9px] pl-[5px] shadow-[inset_1px_1px_0_#fff,inset_-1px_-1px_0_#808080]">
      <div className="flex h-[19px] shrink-0 items-center bg-linear-to-r from-[#808080] to-[#c0c0c0] text-[11px] font-bold text-[#d8d4cc]">
        <Icon name="app" className="size-[14px]" />
        <span className="ml-[3px] flex-1 pt-px tracking-[-0.100px]">Sony Net Notify</span>
        <WinButton className="h-[14px] w-4"><CloseGlyph /></WinButton>
      </div>
      <div className="flex-1 bg-white" />
    </div>
  )
}

function Watermark() {
  return (
    <svg viewBox="0 0 200 64" className="absolute top-[608px] left-[1037px] h-16 w-[200px] opacity-60">
      <g fill="#e6e6e6" stroke="#e6e6e6" strokeWidth="1.300" fontFamily="Roboto, sans-serif" fontSize="49" fontWeight="300">
        <text x="2" y="50" textLength="69" lengthAdjust="spacingAndGlyphs">ANY</text>
        <text x="131" y="50" textLength="65" lengthAdjust="spacingAndGlyphs">RUN</text>
      </g>
      <g fill="none" stroke="#e6e6e6" strokeWidth="3.500" strokeLinejoin="round">
        <path d="M81 10V8l-5 2v44l5 2" />
        <path d="M86 46V4l39 21v6l-5-1-30-16" />
        <path d="M90 16l35 19-39 25v-7" />
      </g>
    </svg>
  )
}

export default function App() {
  return (
    <div className={clsx('relative flex h-[720px] w-[1280px] flex-col overflow-hidden bg-[#858585]', UI)}>
      <TitleBar />
      <MenuBar />
      <MainToolbar />
      <div className="flex h-[347px] shrink-0 pl-[2px]">
        <MediaPanel />
        <TrimmerPanel />
        <PreviewPanel />
        <MixerPanel />
      </div>
      <div className="mt-[5px] flex h-[274px] shrink-0 border-t border-[#6c6c6c]">
        <TrackHeader />
        <Timeline />
      </div>
      <TaskBar />
      <NotifyWindow />
      <SecurityDialog />
      <Watermark />
    </div>
  )
}
